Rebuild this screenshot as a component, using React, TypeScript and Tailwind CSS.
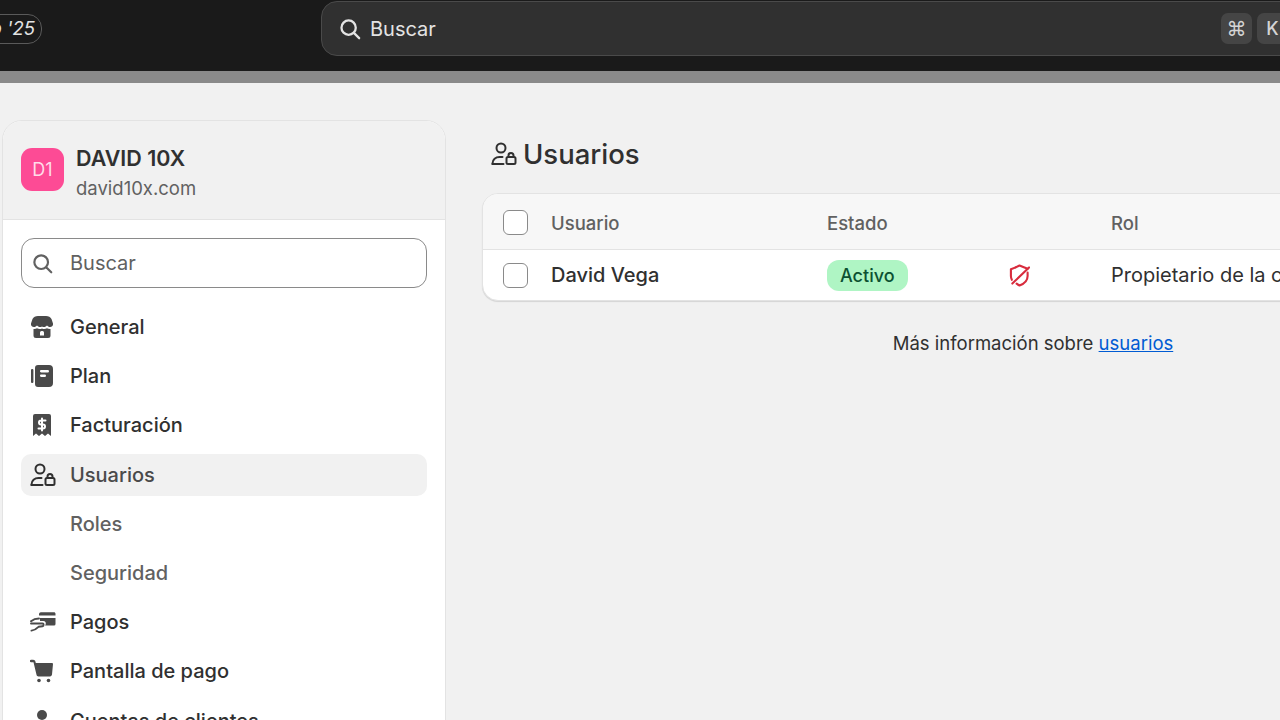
import React from "react";

const fill = "#4a4a4a";

function UsersIcon({ className }: { className: string }) {
  return (
    <svg viewBox="0 0 26 24" className={className} fill="none" stroke="#303030" strokeWidth="2" strokeLinecap="round" strokeLinejoin="round">
      <circle cx="10" cy="6" r="4.500" />
      <path d="M1.500 22v-.5c0-4 3.200-6.500 7-6.500h3" />
      <path d="M1.500 22h11" />
      <rect x="15.500" y="15" width="9" height="7" rx="1.500" />
      <path d="M17.500 15v-1.500a2.500 2.500 0 0 1 5 0V15" />
    </svg>
  );
}

function StoreIcon() {
  return (
    <svg viewBox="0 0 24 24" className="w-[24px] h-[24px]" fill={fill}>
      <path d="M8 1h8c2.500 0 4.500 1 5.500 3l1.500 4.500c.4 2-1 3.500-3 3.500-1.200 0-2.300-.6-3-1.500-.7.900-1.800 1.500-3 1.500-.7 0-1.400-.2-2-.6-.6.400-1.300.6-2 .6-1.200 0-2.300-.6-3-1.500-.7.900-1.800 1.500-3 1.500-2 0-3.400-1.500-3-3.500L2.500 4C3.500 2 5.500 1 8 1z" />
      <path fillRule="evenodd" d="M3.500 14c1.300.2 2.600-.1 3.500-.7 1.500 1 3.500 1.100 5 .2 1.500.9 3.500.8 5-.2.900.6 2.200.9 3.500.7v6.500a2.500 2.500 0 0 1-2.500 2.500H6a2.500 2.500 0 0 1-2.500-2.500V14zM10 17.500a1.500 1.500 0 0 1 1.500-1.500h1a1.500 1.500 0 0 1 1.500 1.500V20.500h-4v-3z" />
    </svg>
  );
}

function PlanIcon() {
  return (
    <svg viewBox="0 0 24 24" className="w-[24px] h-[24px]" fill={fill}>
      <rect x="1" y="5" width="2.400" height="14" rx="1" />
      <path fillRule="evenodd" d="M8 1h11a4 4 0 0 1 4 4v14a4 4 0 0 1-4 4H8a3 3 0 0 1-3-3V4a3 3 0 0 1 3-3zm2 6.200c0 .7.500 1.200 1.200 1.200h6.600a1.200 1.200 0 0 0 0-2.400h-6.600c-.7 0-1.200.5-1.200 1.200zm0 4.500c0 .7.500 1.200 1.200 1.200h3.600a1.200 1.200 0 0 0 0-2.400h-3.600c-.7 0-1.200.5-1.200 1.200z" />
    </svg>
  );
}

function BillingIcon() {
  return (
    <svg viewBox="0 0 24 24" className="w-[24px] h-[24px]">
      <path fill={fill} d="M5 1h14a2 2 0 0 1 2 2v20l-3-2.500-3 2.500-3-2.500-3 2.500-3-2.500L3 23V3a2 2 0 0 1 2-2z" />
      <path fill="none" stroke="#fff" strokeWidth="2" strokeLinecap="round" d="M15.500 7.500h-4.500a2 2 0 0 0 0 4h2a2 2 0 0 1 0 4H8.500M12 5.500v12" />
    </svg>
  );
}

function PaymentsIcon() {
  return (
    <svg viewBox="0 0 26 20" className="w-[26px] h-[20px]">
      <path fill={fill} d="M9 1.500C9.500.7 10.300.300 11.200.300H24c.8 0 1.500.7 1.500 1.500V3.500H9z" />
      <path fill={fill} d="M10 6h15.500v6a1.500 1.500 0 0 1-1.500 1.500H15c1-1 1.300-3.500-.5-4.200-1.500-.6-3-.4-4.500-.3z" />
      <path fill="none" stroke={fill} strokeWidth="1.900" strokeLinecap="round" strokeLinejoin="round" d="M1 9.200c2.500-2 5-2.700 8-2.700M1 11.500h11.500c1.500 0 1.500 2.500 0 2.700L8.500 14.800c-1.500 1.500-3.500 3.400-7 3.800" />
    </svg>
  );
}

function CartIcon() {
  return (
    <svg viewBox="0 0 24 24" className="w-[24px] h-[24px]" fill={fill}>
      <path d="M1 .800h2.200c1.100 0 2 .7 2.200 1.800L5.800 4H22a1 1 0 0 1 1 1.100l-1 10.500c-.1 1-1 1.900-2 1.900H8.500c-1 0-1.800-.7-2-1.700L3.500 3.200 1 3.200a1.200 1.200 0 0 1 0-2.400z" />
      <circle cx="9" cy="21.500" r="1.800" />
      <circle cx="18.500" cy="21.500" r="1.800" />
    </svg>
  );
}

function CustomerIcon() {
  return (
    <svg viewBox="0 0 24 24" className="w-[24px] h-[24px]" fill={fill}>
      <circle cx="12" cy="6" r="5" />
      <path d="M12 13c5 0 9 3 9 7v3H3v-3c0-4 4-7 9-7z" />
    </svg>
  );
}

function ShieldOffIcon() {
  return (
    <svg viewBox="0 0 22 24" className="w-[21px] h-[23px]" fill="none" stroke="#d82c3d" strokeWidth="2.200" strokeLinecap="round" strokeLinejoin="round">
      <path d="M7 3.500 11 1.500l8.500 3.500" />
      <path d="M21 3.500 3.500 20.500" />
      <path d="M7 3.500 2 5.500v7c0 1.500.4 2.800 1 4" />
      <path d="M8 20.500c1 .8 2 1.500 3 2 4-1.500 8.500-5 8.500-10V9" />
    </svg>
  );
}

function SearchIcon({ color, className }: { color: string; className: string }) {
  return (
    <svg viewBox="0 0 24 24" className={className} fill="none" stroke={color} strokeWidth="2.500" strokeLinecap="round">
      <circle cx="10.500" cy="10.500" r="7.800" />
      <path d="M16.500 16.500 22 22" />
    </svg>
  );
}

function Row({ icon, label, active, sub }: { icon?: React.ReactNode; label: string; active?: boolean; sub?: boolean }) {
  return (
    <div className={`h-[42px] rounded-[10px] flex items-center mb-[7.200px] ${active ? "bg-[#f1f1f1]" : ""}`}>
      <div className="w-[49px] pl-[9px] flex items-center shrink-0">{icon}</div>
      <span className={`text-[20px] ${sub ? "font-medium text-[#616161]" : active ? "font-medium text-[#4a4a4a]" : "font-[550] text-[#303030]"}`}>{label}</span>
    </div>
  );
}

function Checkbox() {
  return <div className="w-[25px] h-[25px] rounded-[6px] border border-[#8a8a8a] bg-white shrink-0" />;
}

export default function App() {
  return (
    <div className="w-[1280px] h-[720px] overflow-hidden bg-[#f1f1f1] font-['Inter',sans-serif] flex flex-col">
      <header className="h-[71px] shrink-0 bg-[#1a1a1a] flex items-start">
        <div className="w-[42px] shrink-0 mt-[14px] flex justify-end overflow-hidden">
          <div className="h-[30px] px-[6px] rounded-[14px] border border-[#5a5a5a] text-[#e3e3e3] italic text-[18.500px] flex items-center whitespace-nowrap shrink-0">Verano '25</div>
        </div>
        <div className="ml-[279px] mt-[1px] h-[55px] w-[978px] shrink-0 rounded-[16px] bg-[#303030] border border-[#4a4a4a] flex items-center pl-[17px] pr-[10px]">
          <SearchIcon color="#e3e3e3" className="w-[22px] h-[22px]" />
          <span className="ml-[9px] text-[20px] text-[#e3e3e3]">Buscar</span>
          <div className="ml-auto flex gap-[5px]">
            <div className="w-[31px] h-[31px] rounded-[7px] bg-[#454545] flex items-center justify-center text-[#d4d4d4] text-[20px] font-['DejaVu_Sans',sans-serif]">⌘</div>
            <div className="w-[31px] h-[31px] rounded-[7px] bg-[#454545] flex items-center justify-center text-[#d4d4d4] text-[18px] font-medium">K</div>
          </div>
        </div>
      </header>
      <div className="h-[12px] shrink-0 bg-[#8a8a8a]" />
      <div className="flex items-start pl-[2px] pt-[37px]">
        <aside className="w-[444px] shrink-0 rounded-t-[20px] border border-[#e3e3e3] bg-white overflow-hidden h-[640px]">
          <div className="h-[99px] bg-[#f1f1f1] border-b border-[#e3e3e3] flex items-start pt-[27px] pl-[18px] gap-[12px]">
            <div className="w-[43px] h-[43px] rounded-[11px] bg-[#fd4b95] text-[#ffdbe9] text-[18px] flex items-center justify-center">D1</div>
            <div className="flex flex-col gap-[4px] -mt-[3px]">
              <div className="text-[21.500px] leading-[26px] font-semibold text-[#303030]">DAVID 10X</div>
              <div className="text-[18.500px] leading-[26px] text-[#616161]">david10x.com</div>
            </div>
          </div>
          <div className="px-[18px] pt-[18px]">
            <div className="h-[50px] rounded-[13px] border border-[#8a8a8a] flex items-center pl-[10px] mb-[18px]">
              <SearchIcon color="#616161" className="w-[21px] h-[21px]" />
              <span className="ml-[17px] text-[20px] text-[#616161]">Buscar</span>
            </div>
            <Row icon={<StoreIcon />} label="General" />
            <Row icon={<PlanIcon />} label="Plan" />
            <Row icon={<BillingIcon />} label="Facturación" />
            <Row icon={<UsersIcon className="w-[26px] h-[24px]" />} label="Usuarios" active />
            <Row label="Roles" sub />
            <Row label="Seguridad" sub />
            <Row icon={<PaymentsIcon />} label="Pagos" />
            <Row icon={<CartIcon />} label="Pantalla de pago" />
            <Row icon={<CustomerIcon />} label="Cuentas de clientes" />
          </div>
        </aside>
        <main className="ml-[36px] w-[1102px] shrink-0 pt-[17px]">
          <div className="flex items-center h-[34px] pl-[9px] gap-[6px] text-[#303030]">
            <UsersIcon className="w-[26px] h-[24px]" />
            <h1 className="text-[27.500px] font-[550] leading-[34px]">Usuarios</h1>
          </div>
          <div className="mt-[22px] rounded-[16px] bg-white border border-[#e3e3e3] shadow-[0_1px_1px_rgba(0,0,0,0.12)] overflow-hidden">
            <div className="h-[56px] pt-[1px] bg-[#f7f7f7] border-b border-[#e3e3e3] flex items-center text-[18.500px] leading-[28px] font-medium text-[#616161]">
              <div className="w-[344px] pl-[20px] flex items-center gap-[22px] shrink-0">
                <Checkbox />
                <span className="ml-[1px] mt-[1px]">Usuario</span>
              </div>
              <div className="w-[284px] shrink-0 mt-[1px]">Estado</div>
              <div className="mt-[1px]">Rol</div>
            </div>
            <div className="h-[50px] flex items-center text-[20px] text-[#303030]">
              <div className="w-[344px] pl-[20px] flex items-center gap-[22px] shrink-0">
                <Checkbox />
                <span className="ml-[1px] font-[550]">David Vega</span>
              </div>
              <div className="w-[182px] shrink-0">
                <span className="inline-flex items-center h-[31px] px-[13px] rounded-[12px] bg-[#aff5c4] text-[#0c5132] text-[18px] font-[550]">Activo</span>
              </div>
              <div className="w-[102px] shrink-0 flex">
                <ShieldOffIcon />
              </div>
              <div className="whitespace-nowrap">Propietario de la cuenta</div>
            </div>
          </div>
          <p className="mt-[29px] text-center text-[18.500px] leading-[26px] text-[#303030]">
            Más información sobre <a className="text-[#005bd3] underline">usuarios</a>
          </p>
        </main>
      </div>
    </div>
  );
}
